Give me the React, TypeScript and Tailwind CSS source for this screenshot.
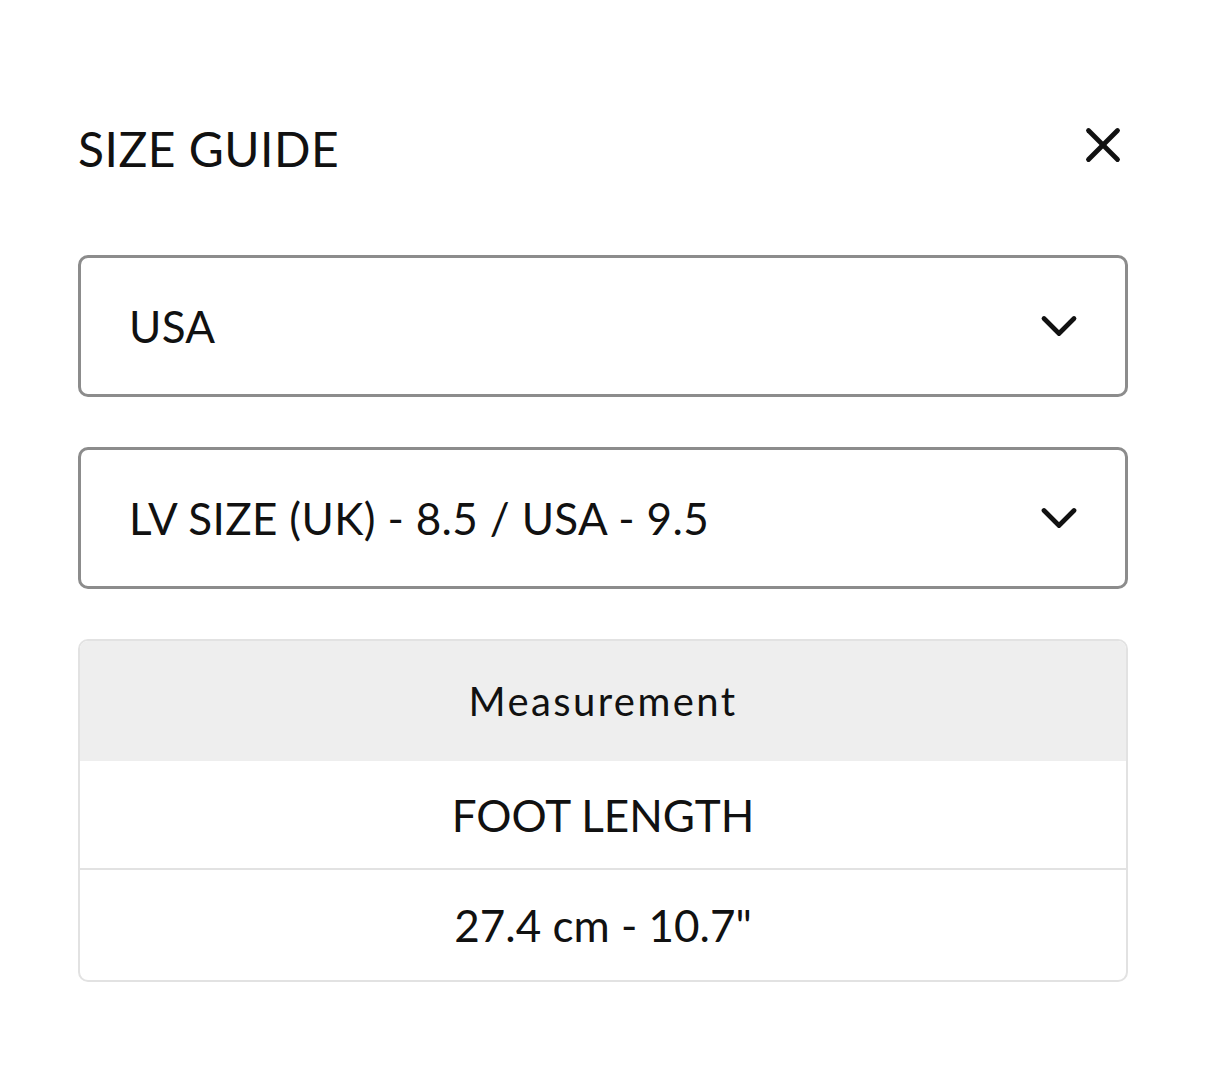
import { ChevronDown, X } from "lucide-react";

const FONT = { fontFamily: "Lato, 'Noto Sans', sans-serif" };

function Select({ value }: { value: string }) {
  return (
    <div className="flex h-[142px] items-center justify-between rounded-[10px] border-[3px] border-[#8c8c8c] bg-white pl-[48px] pr-[36px]">
      <span className="text-[44px] leading-none tracking-[0.008em] text-[#111]">{value}</span>
      <ChevronDown className="h-[60px] w-[60px] text-[#111]" strokeWidth={1.9} />
    </div>
  );
}

export default function App() {
  return (
    <div className="min-h-screen bg-white px-[78px] pt-[124px]" style={FONT}>
      <div className="flex items-center justify-between">
        <h1 className="text-[48px] font-normal leading-none tracking-[0.01em] text-[#111]">SIZE GUIDE</h1>
        <button className="-mr-[4px] -mt-[8px] text-[#111]">
          <X className="h-[58px] w-[58px]" strokeWidth={2} />
        </button>
      </div>

      <div className="mt-[81px] space-y-[50px]">
        <Select value="USA" />
        <Select value="LV SIZE (UK) - 8.5 / USA - 9.5" />
      </div>

      <div className="mt-[50px] overflow-hidden rounded-[10px] border-2 border-[#e2e2e2] text-[#111]">
        <div className="flex h-[120px] items-center justify-center bg-[#eeeeee] text-[40px] tracking-[0.06em]">
          Measurement
        </div>
        <div className="flex h-[109px] items-center justify-center border-b-2 border-[#e2e2e2] text-[44px]">
          FOOT LENGTH
        </div>
        <div className="flex h-[110px] items-center justify-center text-[44px]">
          27.4 cm - 10.7"
        </div>
      </div>
    </div>
  );
}
